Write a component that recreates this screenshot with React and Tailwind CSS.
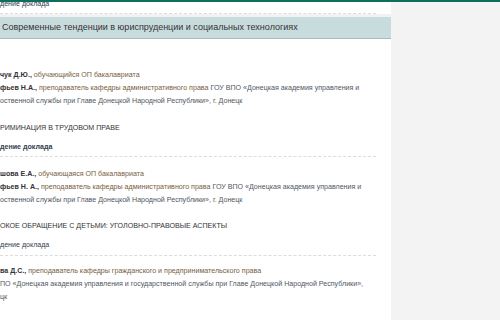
const Dash = () => <div className="h-0 w-[376px] border-t border-dashed border-[#dcdcdc]" />;

const Name = ({ children }) => <span className="font-bold text-[#333]">{children}</span>;
const Role = ({ children }) => <span className="text-[#76603f]">{children}</span>;
const Org = ({ children }) => <span className="text-[#50575f]">{children}</span>;

export default function App() {
  return (
    <div
      className="w-[500px] h-[320px] overflow-hidden bg-white text-[7.1px] leading-[13px]"
      style={{ fontFamily: '"Liberation Sans", Arial, sans-serif' }}
    >
      <div className="h-[2px] bg-[#0d6e5b]" />
      <div className="flex h-[318px]">
        <div className="w-[391px] flex flex-col whitespace-nowrap">
          <div className="h-[11px] overflow-hidden">
            <div className="-mt-[2px] leading-[8px] text-[#33404e]">дение доклада</div>
          </div>
          <Dash />
          <div className="h-[3px] bg-[#f1f2f2]" />
          <div className="h-[22px] bg-[#c9dcdd] border-b border-[#a8bcbd] flex items-center pl-[2px] text-[9px] text-[#333]">
            Современные тенденции в юриспруденции и социальных технологиях
          </div>

          <div className="pt-[30px]">
            <div>
              <Name>чук Д.Ю.,</Name> <Role>обучающийся ОП бакалавриата</Role>
            </div>
            <div>
              <Name>фьев Н.А.,</Name> <Role>преподаватель кафедры административного права</Role>{" "}
              <Org>ГОУ ВПО «Донецкая академия управления и</Org>
            </div>
            <div>
              <Org>оственной службы при Главе Донецкой Народной Республики», г. Донецк</Org>
            </div>
          </div>
          <div className="pt-[14px] text-[#333]">РИМИНАЦИЯ В ТРУДОВОМ ПРАВЕ</div>
          <div className="pt-[6px] pb-[2px] font-bold text-[#33404e]">дение доклада</div>
          <Dash />

          <div className="pt-[11px]">
            <div>
              <Name>шова Е.А.,</Name> <Role>обучающаяся ОП бакалавриата</Role>
            </div>
            <div>
              <Name>фьев Н. А.,</Name> <Role>преподаватель кафедры административного права</Role>{" "}
              <Org>ГОУ ВПО «Донецкая академия управления и</Org>
            </div>
            <div>
              <Org>оственной службы при Главе Донецкой Народной Республики», г. Донецк</Org>
            </div>
          </div>
          <div className="pt-[13px] text-[#333]">ОКОЕ ОБРАЩЕНИЕ С ДЕТЬМИ: УГОЛОВНО-ПРАВОВЫЕ АСПЕКТЫ</div>
          <div className="pt-[6px] pb-[3px] text-[#33404e]">дение доклада</div>
          <Dash />

          <div className="pt-[9px]">
            <div>
              <Name>ва Д.С.,</Name> <Role>преподаватель кафедры гражданского и предпринимательского права</Role>
            </div>
            <div>
              <Org>ПО «Донецкая академия управления и государственной службы при Главе Донецкой Народной Республики»,</Org>
            </div>
            <div>
              <Org>цк</Org>
            </div>
          </div>
        </div>
        <div className="flex-1 bg-[#f3f3f3]" />
      </div>
    </div>
  );
}
